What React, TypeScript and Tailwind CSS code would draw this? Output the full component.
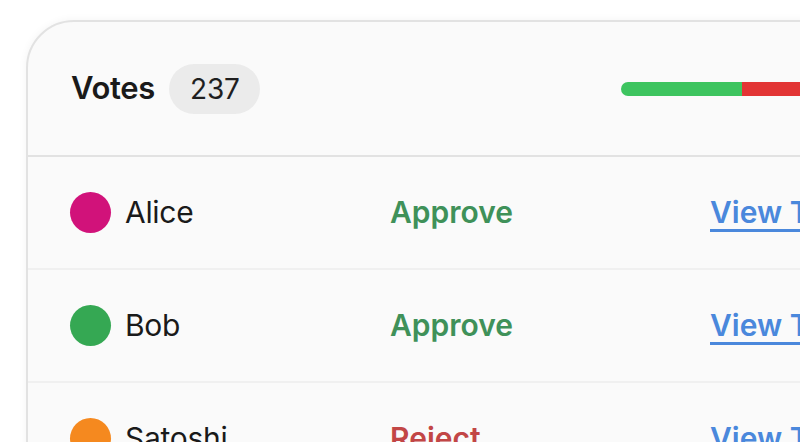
const votes = [
  { name: "Alice", color: "bg-[#d1127a]", vote: "Approve" },
  { name: "Bob", color: "bg-[#35a853]", vote: "Approve" },
  { name: "Satoshi", color: "bg-[#f5891f]", vote: "Reject" },
]

export default function App() {
  return (
    <div className="h-[442px] w-[800px] overflow-hidden bg-white pl-[26px] pt-[20px] font-['Inter',sans-serif]">
      <div className="w-[960px] rounded-tl-[48px] border-2 border-[#e2e2e2] bg-[#fafafa] shadow-[0_0_8px_rgba(0,0,0,0.05)]">
        <div className="flex h-[135px] items-center border-b-2 border-[#e2e2e2] pl-[43px] pr-[43px]">
          <h2 className="text-[31px] font-semibold tracking-[-0.01em] text-[#1a1a1a]">Votes</h2>
          <span className="ml-[14px] flex h-[50px] items-center rounded-full bg-[#ebebeb] px-[21px] text-[28px] tracking-[-0.01em] text-[#1f1f1f]">
            237
          </span>
          <div className="ml-auto flex h-[14px] w-[320px] overflow-hidden rounded-full">
            <div className="h-full w-[121px] bg-[#3dc45f]" />
            <div className="h-full flex-1 bg-[#e23434]" />
          </div>
        </div>
        {votes.map((v) => (
          <div
            key={v.name}
            className="grid h-[113px] grid-cols-[320px_320px_1fr] items-center border-b-2 border-[#f0f0f0] pl-[42px]"
          >
            <div className="flex items-center gap-[14px]">
              <span className={`h-[41px] w-[41px] rounded-full ${v.color}`} />
              <span className="text-[30px] tracking-[-0.01em] text-[#1a1a1a]">{v.name}</span>
            </div>
            <span
              className={`text-[30px] font-semibold ${v.vote === "Approve" ? "text-[#3f9159]" : "text-[#c24646]"}`}
            >
              {v.vote}
            </span>
            <a href="#" className="text-[30px] font-semibold text-[#4a88dc] underline underline-offset-[6px]">
              View Tx
            </a>
          </div>
        ))}
      </div>
    </div>
  )
}
